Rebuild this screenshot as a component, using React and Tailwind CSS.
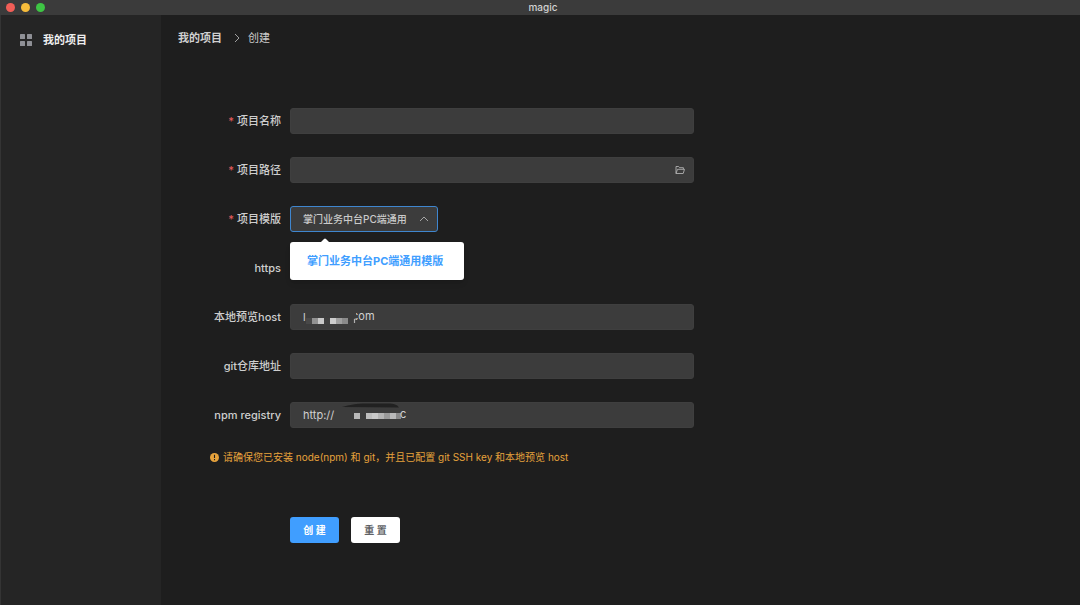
import { useState } from 'react';

const inputClass =
  'block h-[26px] w-full rounded-[3px] border border-[#3f3f3f] bg-[#3c3c3c] px-3 pb-px text-[11px] text-[#d0d0d0] outline-none';

function Row({ id, label, required, children }) {
  return (
    <div className="mb-[23px] flex h-[26px] items-center">
      <label htmlFor={id} className="w-[119px] shrink-0 pr-[9px] pb-px text-right text-[11px] font-medium whitespace-nowrap text-[#cecece]">
        {required && <span className="mr-[3px] text-[#e25c5c]">*</span>}
        {label}
      </label>
      <div className="relative min-w-0 flex-1">{children}</div>
    </div>
  );
}

function HostMask() {
  return (
    <svg className="pointer-events-none absolute top-0 left-0" width="70" height="26" viewBox="0 0 70 26" aria-hidden="true">
      <rect x="60" y="7" width="6" height="12" fill="#3c3c3c" />
      <rect x="16" y="14" width="6" height="6" fill="#484848" />
      <rect x="22" y="14" width="6" height="6" fill="#929292" />
      <rect x="28" y="14" width="6" height="6" fill="#c9c9c9" />
      <rect x="34" y="14" width="6" height="6" fill="#404040" />
      <rect x="40" y="14" width="6" height="6" fill="#cccccc" />
      <rect x="46" y="14" width="6" height="6" fill="#a0a0a0" />
      <rect x="52" y="14" width="6" height="6" fill="#8a8a8a" />
      <path d="M64.5 19v-3.5l2-.7" fill="none" stroke="#b0b0b0" strokeWidth="1.2" />
    </svg>
  );
}

function RegistryMask() {
  return (
    <svg className="pointer-events-none absolute top-0 left-0" width="120" height="26" viewBox="0 0 120 26" aria-hidden="true">
      <path d="M52 5C60 3 66 1.500 76 1.500h22c6 0 9 1 11 4Q80 5 52 5Z" fill="#212121" />
      <rect x="64" y="11" width="6" height="6" fill="#b9b9b9" />
      <rect x="76" y="11" width="6" height="6" fill="#bdbdbd" />
      <rect x="82" y="11" width="6" height="6" fill="#c9c9c9" />
      <rect x="88" y="11" width="6" height="6" fill="#b4b4b4" />
      <rect x="94" y="11" width="6" height="6" fill="#9a9a9a" />
      <rect x="100" y="11" width="6" height="6" fill="#b9b9b9" />
      <rect x="106" y="11" width="5" height="6" fill="#8a8a8a" />
    </svg>
  );
}

export default function App() {
  const [open] = useState(true);
  return (
    <div className="flex min-h-screen flex-col bg-[#1e1e1e] font-[Inter,'Noto_Sans_CJK_SC',sans-serif] text-[11px] leading-4 text-[#dcdcdc]">
      <header className="flex h-[15px] items-center bg-[#3b3b3b]">
        <div className="flex flex-1 items-center gap-[6px] pl-[6px]">
          <span className="size-[9px] rounded-full bg-[#f25e57]" />
          <span className="size-[9px] rounded-full bg-[#f6bc3b]" />
          <span className="size-[9px] rounded-full bg-[#3ec544]" />
        </div>
        <h1 className="pb-px text-[10px] leading-[14px] font-medium text-[#d2d2d2]">magic</h1>
        <div className="flex-1" />
      </header>

      <div className="flex flex-1">
        <nav className="w-[161px] shrink-0 border-l border-[#343434] bg-[#252525] pt-4 pl-[19px]">
          <a href="#projects" className="flex items-center gap-[11px] font-bold text-[#eeeeee]">
            <svg width="12" height="12" viewBox="0 0 12 12" fill="#8f9096" aria-hidden="true">
              <rect width="5" height="5" rx="0.5" />
              <rect x="7" width="5" height="5" rx="0.5" />
              <rect y="7" width="5" height="5" rx="0.5" />
              <rect x="7" y="7" width="5" height="5" rx="0.5" />
            </svg>
            <span className="pt-px">我的项目</span>
          </a>
        </nav>

        <main className="min-w-0 flex-1 px-[10px] pt-[15px]">
          <nav className="flex items-center pl-[7px]">
            <a href="#projects" className="font-bold text-[#d0d0d0]">我的项目</a>
            <svg className="mr-2 ml-3" width="6" height="10" viewBox="0 0 6 10" fill="none" stroke="#a0a0a0" aria-hidden="true">
              <path d="M1 1l4 4-4 4" />
            </svg>
            <span className="text-[#cccccc]">创建</span>
          </nav>

          <form className="mt-[62px] w-full max-w-[523px]" onSubmit={(e) => e.preventDefault()}>
            <Row id="name" label="项目名称" required>
              <input id="name" className={inputClass} />
            </Row>
            <Row id="path" label="项目路径" required>
              <input id="path" className={inputClass} />
              <svg className="absolute top-2 right-[9px]" width="10" height="10" viewBox="0 0 10 10" fill="none" stroke="#b0b0b0" strokeWidth="0.9" aria-hidden="true">
                <path d="M1 8.500V1.500h2.600l1 1.200h3.800v1.600M1 8.500l1.500-4.200h7L8.200 8.500Z" />
              </svg>
            </Row>
            <Row id="template" label="项目模版" required>
              <div className="relative w-[148px]">
                <select
                  id="template"
                  className="block h-[26px] w-full appearance-none rounded-[3px] border border-[#3f86cf] bg-[#3c3c3c] pr-6 pl-3 text-[10px] font-medium text-[#cacaca] outline-none"
                >
                  <option>掌门业务中台PC端通用</option>
                </select>
                <svg className="pointer-events-none absolute top-[10px] right-[9px]" width="10" height="6" viewBox="0 0 10 6" fill="none" stroke="#a6a6a6" aria-hidden="true">
                  <path d="M1 5l4-4 4 4" />
                </svg>
                {open && (
                  <div className="absolute top-9 left-0 z-10 w-[174px] rounded-[3px] bg-white py-[11px] pl-[17px] shadow-md">
                    <svg className="absolute -top-1 left-[30px]" width="10" height="5" viewBox="0 0 10 5" aria-hidden="true">
                      <path d="M0 5l4-4q1-1 2 0l4 4Z" fill="#fff" />
                    </svg>
                    <ul role="listbox" aria-label="项目模版">
                      <li role="option" aria-selected="true" className="font-bold whitespace-nowrap text-[#409eff]">
                        掌门业务中台PC端通用模版
                      </li>
                    </ul>
                  </div>
                )}
              </div>
            </Row>
            <Row label="https" />
            <Row id="host" label="本地预览host">
              <input id="host" className={inputClass} defaultValue="l" />
              <span className="pointer-events-none absolute top-1 left-[62px] text-[#d0d0d0]">com</span>
              <HostMask />
            </Row>
            <Row id="git" label="git仓库地址">
              <input id="git" className={inputClass} />
            </Row>
            <Row id="registry" label="npm registry">
              <input id="registry" className={inputClass} defaultValue="http://" />
              <RegistryMask />
              <span className="pointer-events-none absolute top-1 left-[110px] text-[#d0d0d0]">c</span>
            </Row>

            <p className="-mt-0.5 flex items-center gap-1 pl-[39px] text-[10px] whitespace-nowrap text-[#e6a23c]">
              <svg width="9" height="9" viewBox="0 0 9 9" aria-hidden="true">
                <circle cx="4.500" cy="4.500" r="4.500" fill="#e6a23c" />
                <path d="M4.500 1.800v3.200M4.500 6.100v1.100" stroke="#1e1e1e" strokeWidth="1.1" />
              </svg>
              请确保您已安装 node(npm) 和 git，并且已配置 git SSH key 和本地预览 host
            </p>

            <div className="mt-[52px] flex gap-3 pl-[119px]">
              <button type="submit" className="h-[26px] w-[49px] rounded-[3px] bg-[#409eff] pb-px text-[10px] font-bold text-white">创 建</button>
              <button type="reset" className="h-[26px] w-[49px] rounded-[3px] bg-white pb-px text-[10px] font-bold text-[#606266]">重 置</button>
            </div>
          </form>
        </main>
      </div>
    </div>
  );
}
